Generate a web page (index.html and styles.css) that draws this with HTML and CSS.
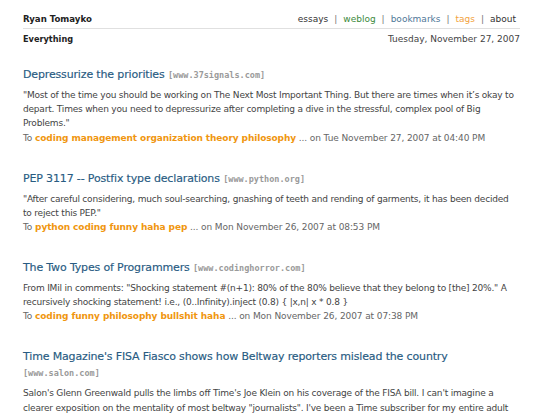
FILE: index.html
```html
<!DOCTYPE html>
<html>
<head>
<meta charset="utf-8">
<link rel="stylesheet" href="styles.css">
</head>
<body>
<div class="page">
  <div class="masthead">
    <span class="site">Ryan Tomayko</span>
    <nav class="nav">
      <a class="n-essays">essays</a><span class="sep">|</span><a class="n-weblog">weblog</a><span class="sep">|</span><a class="n-bookmarks">bookmarks</a><span class="sep">|</span><a class="n-tags">tags</a><span class="sep">|</span><a class="n-about">about</a>
    </nav>
  </div>
  <div class="subhead">
    <span class="section">Everything</span>
    <span class="date">Tuesday, November 27, 2007</span>
  </div>

  <div class="entry">
    <h2 class="title"><a>Depressurize the priorities</a> <span class="src">[www.37signals.com]</span></h2>
    <p class="body">"Most of the time you should be working on The Next Most Important Thing. But there are times when it’s okay to depart. Times when you need to depressurize after completing a dive in the stressful, complex pool of Big Problems."</p>
    <p class="meta">To <span class="tags">coding management organization theory philosophy</span> ... on Tue November 27, 2007 at 04:40 PM</p>
  </div>

  <div class="entry">
    <h2 class="title"><a>PEP 3117 -- Postfix type declarations</a> <span class="src">[www.python.org]</span></h2>
    <p class="body">"After careful considering, much soul-searching, gnashing of teeth and rending of garments, it has been decided to&nbsp;reject this PEP."</p>
    <p class="meta">To <span class="tags">python coding funny haha pep</span> ... on Mon November 26, 2007 at 08:53 PM</p>
  </div>

  <div class="entry">
    <h2 class="title"><a>The Two Types of Programmers</a> <span class="src">[www.codinghorror.com]</span></h2>
    <p class="body">From IMil in comments: "Shocking statement #(n+1): 80% of the 80% believe that they belong to [the] 20%." A recursively shocking statement! i.e., (0..Infinity).inject (0.8) { |x,n| x * 0.8 }</p>
    <p class="meta">To <span class="tags">coding funny philosophy bullshit haha</span> ... on Mon November 26, 2007 at 07:38 PM</p>
  </div>

  <div class="entry">
    <h2 class="title"><a>Time Magazine's FISA Fiasco shows how Beltway reporters mislead the country</a> <span class="src">[www.salon.com]</span></h2>
    <p class="body">Salon's Glenn Greenwald pulls the limbs off Time's Joe Klein on his coverage of the FISA bill. I can't imagine a clearer exposition on the mentality of most beltway "journalists". I've been a Time subscriber for my entire adult life but that might end.</p>
  </div>
</div>
</body>
</html>
```

FILE: styles.css
```css
html, body {
  margin: 0;
  padding: 0;
  background: #fff;
}
body {
  font-family: "DejaVu Sans", Verdana, sans-serif;
  color: #444;
  overflow: hidden;
}
.page {
  width: 497px;
  padding: 12px 0 0 23px;
}
.masthead {
  display: flex;
  justify-content: space-between;
  align-items: center;
  line-height: 14px;
  padding-bottom: 2px;
  border-bottom: 1px solid #e0e0e0;
}
.site {
  font-weight: bold;
  font-size: 8.6px;
  color: #222;
}
.nav {
  display: flex;
  font-size: 9px;
  padding-right: 4px;
}
.nav a { text-decoration: none; }
.sep { color: #777; margin: 0 6px; }
.n-essays, .n-about { color: #333; }
.n-weblog { color: #3c8a3c; }
.n-bookmarks { color: #4f7898; }
.n-tags { color: #f2a23c; }
.subhead {
  display: flex;
  justify-content: space-between;
  line-height: 14px;
  padding-top: 3px;
}
.section {
  font-weight: bold;
  font-size: 8.2px;
  color: #222;
}
.date {
  font-size: 9px;
  color: #444;
}
.entry {
  margin-top: 21px;
}
.entry + .entry {
  margin-top: 27px;
}
.title {
  margin: 0;
  font-size: 11px;
  font-weight: normal;
  letter-spacing: -0.15px;
  line-height: 16px;
  color: #285b82;
  -webkit-text-stroke: 0.15px #285b82;
}
.title a { color: #285b82; }
.src {
  font-family: "DejaVu Sans Mono", monospace;
  font-weight: bold;
  font-size: 8.5px;
  letter-spacing: 0;
  color: #9a9a9a;
  -webkit-text-stroke: 0;
}
.body {
  margin: 5px 0 0 0;
  font-size: 9px;
  letter-spacing: -0.2px;
  line-height: 14.2px;
  color: #444;
}
.meta {
  margin: 1px 0 0 0;
  font-size: 9px;
  line-height: 12px;
  letter-spacing: -0.1px;
  color: #666;
}
.tags {
  color: #f0960f;
  font-weight: bold;
}
```
